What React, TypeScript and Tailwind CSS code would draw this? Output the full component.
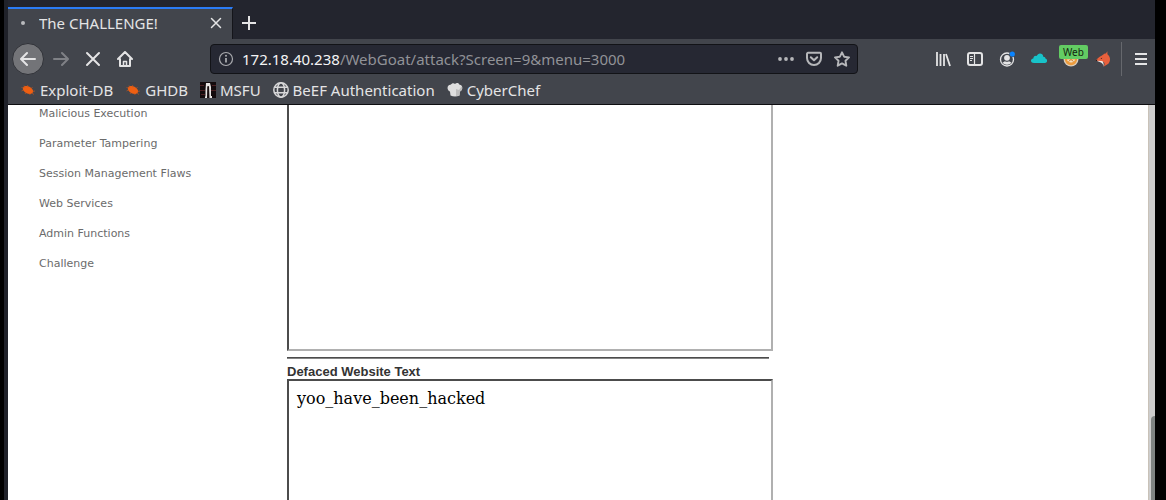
import React from "react";

const ui = "font-['Noto_Sans',sans-serif]";

function CloseIcon({ className }: { className: string }) {
  return (
    <svg viewBox="0 0 16 16" className={className} fill="none" stroke="currentColor" strokeWidth="2" strokeLinecap="round">
      <path d="M2 2 14 14M14 2 2 14" />
    </svg>
  );
}

function ArrowIcon({ className }: { className: string }) {
  return (
    <svg viewBox="0 0 16 16" className={className} fill="none" stroke="currentColor" strokeWidth="2" strokeLinecap="round" strokeLinejoin="round">
      <path d="M15 8H1.5M7 2 1 8l6 6" />
    </svg>
  );
}

function HomeIcon() {
  return (
    <svg viewBox="0 0 16 16" className="size-4" fill="none" stroke="currentColor" strokeWidth="2" strokeLinecap="round" strokeLinejoin="round">
      <path d="M1 8 8 1l7 7M3 8v7h10V8" />
      <path d="M6.500 15v-4.500h3V15" strokeWidth="1.500" />
    </svg>
  );
}

function InfoIcon() {
  return (
    <svg viewBox="0 0 16 16" className="size-4 shrink-0 text-[#a9aaae]" fill="none" stroke="currentColor">
      <circle cx="8" cy="8" r="6.500" strokeWidth="1.200" />
      <path d="M8 7v4.500" strokeWidth="1.800" />
      <circle cx="8" cy="4.800" r="1" fill="currentColor" stroke="none" />
    </svg>
  );
}

function DotsIcon() {
  return (
    <svg viewBox="0 0 16 16" className="size-4" fill="currentColor">
      <circle cx="2" cy="8" r="1.900" />
      <circle cx="8" cy="8" r="1.900" />
      <circle cx="14" cy="8" r="1.900" />
    </svg>
  );
}

function PocketIcon() {
  return (
    <svg viewBox="0 0 16 16" className="size-4" fill="none" stroke="currentColor" strokeWidth="2" strokeLinecap="round" strokeLinejoin="round">
      <path d="M2 1.800h12a1 1 0 0 1 1 1V7a7 7 0 0 1-14 0V2.800a1 1 0 0 1 1-1Z" />
      <path d="M4.800 6.200 8 9.300l3.200-3.100" />
    </svg>
  );
}

function StarIcon() {
  return (
    <svg viewBox="0 0 16 16" className="size-4" fill="none" stroke="currentColor" strokeWidth="1.900" strokeLinejoin="round">
      <path d="m8 1.300 2.100 4.400 4.900.7-3.500 3.400.8 4.900L8 12.400l-4.300 2.300.8-4.900L1 6.400l4.900-.7Z" />
    </svg>
  );
}

function LibraryIcon() {
  return (
    <svg viewBox="0 0 16 16" className="size-4" fill="none" stroke="currentColor" strokeWidth="2">
      <path d="M2 1v14M5.500 3v12M9 3v12" strokeWidth="1.800" />
      <path d="m11 3 4 12" strokeWidth="1.800" />
    </svg>
  );
}

function SidebarIcon() {
  return (
    <svg viewBox="0 0 16 16" className="size-4" fill="none" stroke="currentColor">
      <rect x="1" y="2" width="14" height="12" rx="2" strokeWidth="2" />
      <path d="M7.500 2v12" strokeWidth="1.200" />
      <path d="M3 5.500h3M3 7.500h3M3 9.500h2" />
    </svg>
  );
}

function AccountIcon() {
  return (
    <svg viewBox="0 0 16 16" className="size-4" fill="currentColor">
      <circle cx="8" cy="8.500" r="6.500" fill="none" stroke="currentColor" strokeWidth="1.300" />
      <circle cx="8" cy="6.800" r="2.900" />
      <path d="M3.500 11.500c1.200-.6 1.800-1 2.500-1.300 1.200.8 2.800.8 4 0 .7.300 1.300.7 2.500 1.300-2 3-7 3-9 0Z" />
      <circle cx="13.300" cy="3" r="3.100" fill="#42454c" />
      <circle cx="13.300" cy="3" r="2.600" fill="#0a84ff" />
    </svg>
  );
}

function CloudIcon() {
  return (
    <svg viewBox="0 0 16 16" className="size-4" fill="#18c3c9">
      <path d="M3 12c-3.800 0-4-4-.7-4.600C2.500 5 4.800 4.500 5.800 5.100 6.800 1.500 12 1.800 12.300 5.800 14 5.800 14.500 6.800 14.400 7.600 17 8.200 16.500 12 14 12Z" />
    </svg>
  );
}

function CookieIcon() {
  return (
    <svg viewBox="0 0 16 16" className="size-4">
      <circle cx="8" cy="8" r="7.500" fill="#d9cbb9" />
      <circle cx="8" cy="8" r="6.200" fill="#ed9b3c" />
      <path d="M4 8.500h8c-.5 4-7.500 4-8 0Z" fill="#f3dfc0" />
      <path d="M5.500 10.500 8 8.500l2.500 2" fill="none" stroke="#d17a25" />
    </svg>
  );
}

function FoxIcon() {
  return (
    <svg viewBox="0 0 16 16" className="size-4">
      <path d="M12.300.3c.2 1.300.1 2 .1 2.900 3 2.400 3.600 6.300 1 9.500L8.500 15.800c1.300-2 1.400-3.700.2-4.800L.7 9.700C2 7.700 4 5.700 6.500 4.700L10.500 2v1.200Z" fill="#e8603c" />
      <path d="m1.500 9.800 5.700.2c1.500 1 1.500 3 1.300 5.800-.3-2.200-1-3.400-2.500-4.200Z" fill="#f4ede6" />
      <path d="m1.200 9 1.300-.4-.5 1.300H.7Z" fill="#1d1d22" />
      <path d="m5.500 7.200 1.800-.4-.8 1.200Z" fill="#32211e" />
    </svg>
  );
}

function BugIcon() {
  return (
    <svg viewBox="0 0 16 16" className="size-4 shrink-0" fill="#ee5f12" stroke="#d0571a">
      <ellipse cx="8" cy="8" rx="5.500" ry="3.500" transform="rotate(25 8 8)" stroke="none" />
      <path d="M5 6 4 3.500M8 5.500 7.500 3M11 7l1.500-2M12.500 9.500l2.500-.5M12 11l2 1.500M9.500 11l.5 2M6 10.500 5 12M3.500 8l-2 1M3.500 6l-2-.5" strokeWidth=".6" />
    </svg>
  );
}

function MsfuIcon() {
  return (
    <svg viewBox="0 0 16 16" className="size-4 shrink-0">
      <path d="M0 0h16v16H0Z" fill="#130b0d" />
      <path d="M0 3h4v1H0ZM12 3h4v1h-4ZM0 8h5v1H0ZM11 8h5v1h-5ZM1 12h4v1H1Z" fill="#4c2023" />
      <path d="M6 1h4l1 4v9h1v2H9.500L9 4 7.500 5 7 16H5v-1.500h.5V8Z" fill="#e7e4e2" />
      <path d="M8 4v12" stroke="#1c1012" />
    </svg>
  );
}

function GlobeIcon() {
  return (
    <svg viewBox="0 0 16 16" className="size-4 shrink-0" fill="none" stroke="#d8d8d9" strokeWidth="1.500">
      <circle cx="8" cy="8" r="7.200" />
      <ellipse cx="8" cy="8" rx="3.600" ry="7.200" />
      <path d="M1.500 5.300h13M1.500 10.700h13" />
    </svg>
  );
}

function ChefIcon() {
  return (
    <svg viewBox="0 0 16 16" className="size-4 shrink-0">
      <path d="M3.500 13.500 3 9.500C-.5 8-.2 3 3.500 2.800 5 .8 7 .8 8 2c1.500-1.500 4-1 4.500.8C16.500 3 16 8.500 12.800 9.500l-.3 4Q8 15.500 3.500 13.500Z" fill="#dedede" />
      <path d="M9 7v7l3.500-.5.300-4C15 9 15.800 6 14.500 4.500L12 8Z" fill="#bdbdbd" />
    </svg>
  );
}

function ToolButton({ label, children }: { label: string; children: React.ReactNode }) {
  return (
    <button type="button" aria-label={label} className="relative flex size-8 shrink-0 items-center justify-center">
      {children}
    </button>
  );
}

const bookmarks = [
  { name: "Exploit-DB", icon: <BugIcon /> },
  { name: "GHDB", icon: <BugIcon /> },
  { name: "MSFU", icon: <MsfuIcon /> },
  { name: "BeEF Authentication", icon: <GlobeIcon /> },
  { name: "CyberChef", icon: <ChefIcon /> },
];

const lessons = [
  "Malicious Execution",
  "Parameter Tampering",
  "Session Management Flaws",
  "Web Services",
  "Admin Functions",
  "Challenge",
];

function TabBar() {
  return (
    <div className="flex h-[39px] shrink-0 items-end bg-[#23252e]">
      <div className="flex h-8 w-[225px] items-center border-t-2 border-r border-t-[#2b7cf6] border-r-[#14151a] bg-[#42454c] pr-2 pb-0.5 pl-[13px]">
        <span className="mr-3.5 size-1 shrink-0 rounded-full bg-[#b9babd]" />
        <span className="flex-1 truncate text-[15px] leading-5">The CHALLENGE!</span>
        <button type="button" aria-label="Close tab" className="flex size-4 items-center justify-center">
          <CloseIcon className="size-3" />
        </button>
      </div>
      <button type="button" aria-label="New tab" className="flex size-8 items-center justify-center">
        <svg viewBox="0 0 16 16" className="size-4" fill="none" stroke="currentColor" strokeWidth="2">
          <path d="M8 1v14M1 8h14" />
        </svg>
      </button>
    </div>
  );
}

function Toolbar() {
  return (
    <div className="flex h-10 shrink-0 items-center bg-[#42454c] pl-1">
      <button type="button" aria-label="Back" className="mr-px flex size-8 shrink-0 items-center justify-center rounded-full border border-[#303238] bg-[#737478]">
        <ArrowIcon className="size-4" />
      </button>
      <button type="button" aria-label="Forward" disabled className="flex size-8 shrink-0 items-center justify-center text-[#7f8186]">
        <ArrowIcon className="size-4 rotate-180" />
      </button>
      <ToolButton label="Stop">
        <CloseIcon className="size-4" />
      </ToolButton>
      <ToolButton label="Home">
        <HomeIcon />
      </ToolButton>
      <div className="mx-[69px] flex h-[30px] min-w-0 flex-1 items-center rounded border border-[#121317] bg-[#262833] px-[7px]">
        <InfoIcon />
        <div contentEditable suppressContentEditableWarning role="textbox" aria-label="Address" className="ml-2 min-w-0 flex-1 truncate text-[15px] leading-5 text-[#919297] outline-none">
          <span className="text-[#f4f4f5]">172.18.40.238</span>/WebGoat/attack?Screen=9&amp;menu=3000
        </div>
        <div className="flex gap-3 text-[#b6b7ba]">
          <button type="button" aria-label="Page actions"><DotsIcon /></button>
          <button type="button" aria-label="Save to Pocket"><PocketIcon /></button>
          <button type="button" aria-label="Bookmark this page"><StarIcon /></button>
        </div>
      </div>
      <ToolButton label="Library"><LibraryIcon /></ToolButton>
      <ToolButton label="Sidebars"><SidebarIcon /></ToolButton>
      <ToolButton label="Account"><AccountIcon /></ToolButton>
      <ToolButton label="Cloud"><CloudIcon /></ToolButton>
      <ToolButton label="Cookies">
        <CookieIcon />
        <span className="absolute top-0.5 left-1 rounded-xs bg-[#63cc63] px-1 text-[10px] leading-[14px] text-[#14240f]">Web</span>
      </ToolButton>
      <ToolButton label="Fox proxy"><FoxIcon /></ToolButton>
      <span className="mr-[5px] ml-0.5 h-[34px] w-px shrink-0 bg-[#66686d]" />
      <button type="button" aria-label="Menu" className="flex h-8 w-7 shrink-0 items-center justify-center">
        <svg viewBox="0 0 16 16" className="size-4" fill="none" stroke="currentColor" strokeWidth="2">
          <path d="M2 3h12M2 8h12M2 13h12" />
        </svg>
      </button>
    </div>
  );
}

export default function App() {
  return (
    <div className="flex h-screen overflow-hidden bg-black pr-[11px] pl-1">
      <div className="flex min-w-0 flex-1 flex-col border-l-4 border-[#20222a]">
        <header className={`${ui} shrink-0 text-[#e4e4e5]`}>
          <TabBar />
          <Toolbar />
          <nav className="flex h-[26px] items-center gap-3 border-b border-[#0e0e11] bg-[#42454c] px-3 pb-1">
            {bookmarks.map((b) => (
              <a key={b.name} href="#" className="flex items-center gap-1 text-[15px] leading-5 whitespace-nowrap">
                {b.icon}
                {b.name}
              </a>
            ))}
          </nav>
        </header>
        <div className="flex min-h-0 flex-1 bg-white">
          <nav className="w-[279px] shrink-0 overflow-hidden pl-[31px]">
            <ul className="-mt-1.5 font-['DejaVu_Sans',sans-serif] text-[11px] leading-[30px] text-[#6b6b6b]">
              {lessons.map((l) => (
                <li key={l}>
                  <a href="#">{l}</a>
                </li>
              ))}
            </ul>
          </nav>
          <main className="flex min-w-0 flex-1 flex-col overflow-hidden">
            <div className="h-[246px] w-[486px] shrink-0 border-2 border-t-0 border-[#b0b0b0] border-l-[#4c4c4c]" />
            <hr className="mt-1.5 w-[482px] shrink-0 border-t border-b border-t-[#4c4c4c] border-b-[#858585]" />
            <h2 className="mt-1.5 shrink-0 font-['Liberation_Sans',sans-serif] text-[13px] leading-[14px] font-bold text-[#333]">Defaced Website Text</h2>
            <div className="w-[486px] flex-1 border-2 border-b-0 border-[#4c4c4c] border-r-[#b0b0b0] p-2 font-['DejaVu_Serif',serif] text-[16px] leading-[19px] text-black">
              yoo_have_been_hacked
            </div>
          </main>
          <div className="flex w-[7px] shrink-0 flex-col border-l border-[#c9c2b8] bg-[#cdcdcd] pl-0.5">
            <div className="flex-[311]" />
            <div className="flex-[84] rounded-tl bg-[#7e8382]" />
          </div>
        </div>
      </div>
    </div>
  );
}
